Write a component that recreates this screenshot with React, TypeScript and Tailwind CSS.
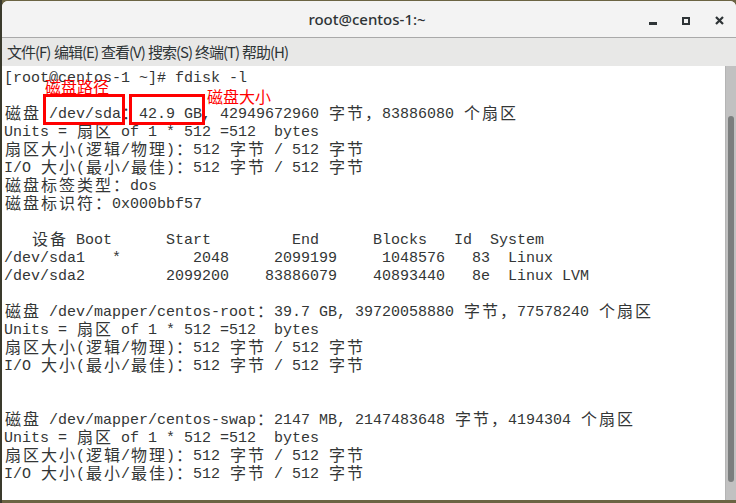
import React from "react";

const lines: string[] = [
  "[root@centos-1 ~]# fdisk -l",
  "",
  "磁盘 /dev/sda：42.9 GB, 42949672960 字节，83886080 个扇区",
  "Units = 扇区 of 1 * 512 =512  bytes",
  "扇区大小(逻辑/物理)：512 字节 / 512 字节",
  "I/O 大小(最小/最佳)：512 字节 / 512 字节",
  "磁盘标签类型：dos",
  "磁盘标识符：0x000bbf57",
  "",
  "   设备 Boot      Start         End      Blocks   Id  System",
  "/dev/sda1   *        2048     2099199     1048576   83  Linux",
  "/dev/sda2         2099200    83886079    40893440   8e  Linux LVM",
  "",
  "磁盘 /dev/mapper/centos-root：39.7 GB, 39720058880 字节，77578240 个扇区",
  "Units = 扇区 of 1 * 512 =512  bytes",
  "扇区大小(逻辑/物理)：512 字节 / 512 字节",
  "I/O 大小(最小/最佳)：512 字节 / 512 字节",
  "",
  "",
  "磁盘 /dev/mapper/centos-swap：2147 MB, 2147483648 字节，4194304 个扇区",
  "Units = 扇区 of 1 * 512 =512  bytes",
  "扇区大小(逻辑/物理)：512 字节 / 512 字节",
  "I/O 大小(最小/最佳)：512 字节 / 512 字节",
];

function isWide(ch: string) {
  const c = ch.codePointAt(0) || 0;
  return c >= 0x2e80;
}

function Line({ text }: { text: string }) {
  const chars = Array.from(text);
  return (
    <div className="flex h-[18px] whitespace-pre">
      {chars.map((ch, i) =>
        isWide(ch) ? (
          <span
            key={i}
            className="-translate-y-[3px] inline-block w-[18px] shrink-0 text-center text-[16px] leading-[18px] [font-family:'Noto_Sans_CJK_SC',sans-serif]"
          >
            {ch}
          </span>
        ) : (
          <span key={i} className="inline-block w-[9px] shrink-0 text-[15px] leading-[18px]">
            {ch}
          </span>
        )
      )}
    </div>
  );
}

const menus = ["文件(F)", "编辑(E)", "查看(V)", "搜索(S)", "终端(T)", "帮助(H)"];

export default function App() {
  return (
    <div className="fixed inset-0 overflow-hidden w-[736px] h-[503px] bg-[#6b6443] pt-[1px] border-l-2 border-[#3a3a2c]">
      <div className="w-[734px] h-[499px] grid grid-rows-[37px_28px_434px] bg-white rounded-tl-[6px] rounded-tr-[6px]">
        {/* title bar */}
        <div className="bg-[#f3f3f3] rounded-tl-[6px] rounded-tr-[6px] grid grid-cols-[1fr_auto_1fr] items-center border-b border-[#a9a9a9]">
          <div />
          <span className="text-[15px] text-[#2e3436] [font-family:'Noto_Sans',sans-serif] font-medium pr-[4px]">
            root@centos-1:~
          </span>
          <div className="flex items-center justify-end gap-[25px] pr-[12px] pt-[3px]">
            <div className="w-[8px] h-[8px] flex items-end">
              <div className="w-[8px] h-[2.5px] bg-[#2e3436]" />
            </div>
            <div className="w-[8px] h-[8px] border-2 border-[#2e3436]" />
            <svg width="9" height="9" viewBox="0 0 9 9">
              <path d="M1 1 L8 8 M8 1 L1 8" stroke="#2e3436" strokeWidth="2.2" />
            </svg>
          </div>
        </div>
        {/* menu bar */}
        <div className="bg-[#e8e8e7] flex items-center pl-[5px] text-[15px] text-[#2e3436] [font-family:'Noto_Sans_CJK_SC',sans-serif]">
          {menus.map((m) => (
            <span key={m} className="w-[47px] shrink-0 tracking-[-1px]">{m}</span>
          ))}
        </div>
        {/* terminal */}
        <div className="grid grid-cols-[723px_11px] bg-white">
          <div className="pl-[2px] pt-[4px] text-[#333636] [font-family:'Liberation_Mono',monospace] relative">
            {lines.map((l, i) => (
              <Line key={i} text={l} />
            ))}
            {/* annotations */}
            <div className="absolute left-[41px] top-[28px] w-[82px] h-[31px] border-[3px] border-[#ff0000]" />
            <div className="absolute left-[127px] top-[28px] w-[76px] h-[31px] border-[3px] border-[#ff0000]" />
            <div className="absolute left-[43px] top-[11px] text-[16px] leading-[18px] text-[#ff0000] [font-family:'Noto_Sans_CJK_SC',sans-serif]">
              磁盘路径
            </div>
            <div className="absolute left-[205px] top-[21px] text-[16px] leading-[18px] text-[#ff0000] [font-family:'Noto_Sans_CJK_SC',sans-serif]">
              磁盘大小
            </div>
          </div>
          {/* scrollbar */}
          <div className="bg-[#c1c1c1] border-l border-[#b4b4b4] pt-[50px] pl-[2px]">
            <div className="w-[6px] h-[366px] rounded-[3px] bg-[#7b7e7e]" />
          </div>
        </div>
      </div>
    </div>
  );
}
